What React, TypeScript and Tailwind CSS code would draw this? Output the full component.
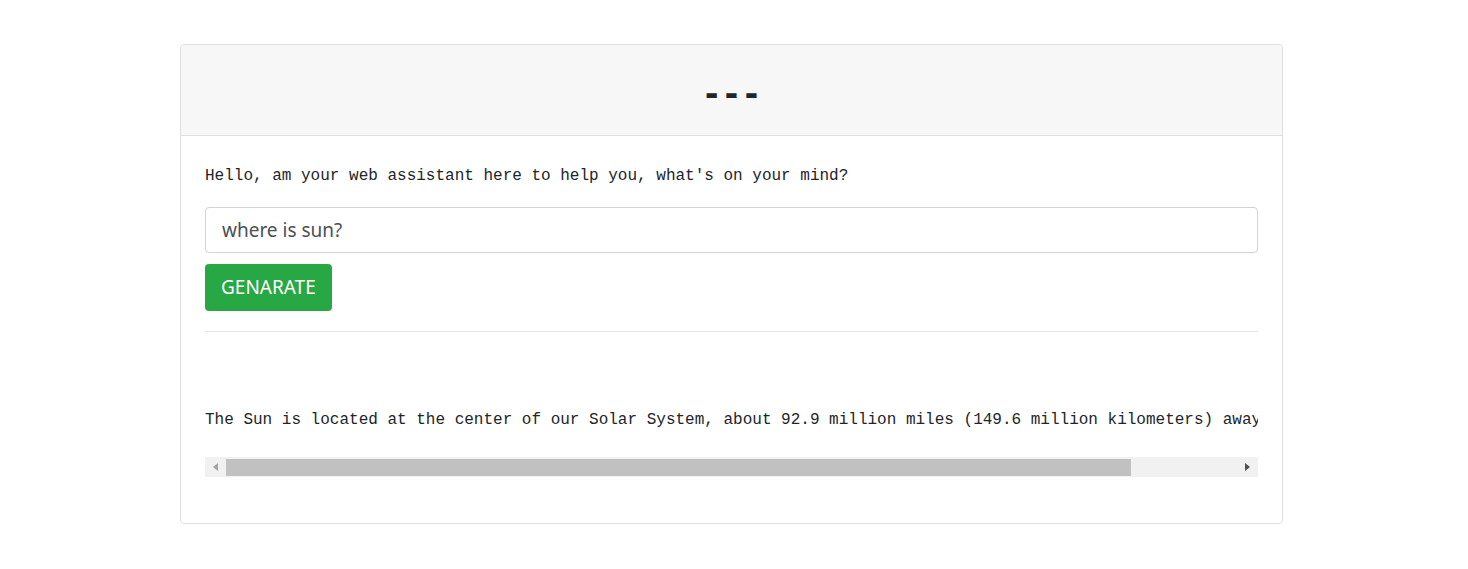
import React from "react";

export default function App() {
  return (
    <div className="min-h-[569px] bg-white pt-[44px]">
      <div className="ml-[180px] w-[1103px] rounded-[4px] border border-[#dfdfdf] bg-white">
        <div className="flex h-[91px] items-center justify-center rounded-t-[4px] border-b border-[#dfdfdf] bg-[#f7f7f7]">
          <h1 className="mt-[8px] font-['DejaVu_Sans_Mono',monospace] text-[33px] font-bold leading-[40px] text-[#212529]">---</h1>
        </div>
        <div className="px-[24px] pb-[46px] pt-[28px]">
          <p className="font-['Liberation_Mono',monospace] text-[16px] leading-[24px] text-[#212529]">
            Hello, am your web assistant here to help you, what's on your mind?
          </p>
          <input
            defaultValue="where is sun?"
            className="mt-[19px] block h-[46px] w-full rounded-[4px] border border-[#ced4da] px-[16px] font-['Noto_Sans',sans-serif] text-[19px] text-[#495057] outline-none"
          />
          <button className="mt-[11px] h-[47px] rounded-[4px] bg-[#28a745] px-[16px] font-['Noto_Sans',sans-serif] text-[19px] text-white">
            GENARATE
          </button>
          <hr className="mt-[20px] border-t border-[#e5e5e5]" />
          <div className="mt-[76px] overflow-hidden">
            <pre className="whitespace-pre font-['Liberation_Mono',monospace] text-[16px] leading-[24px] text-[#212529]">
              The Sun is located at the center of our Solar System, about 92.9 million miles (149.6 million kilometers) away from Earth.
            </pre>
          </div>
          <div className="mt-[25px] flex h-[20px] items-center bg-[#f1f1f1]">
            <div className="flex w-[21px] items-center justify-center">
              <svg width="5" height="8" viewBox="0 0 5 8"><path d="M5 0 L0 4 L5 8 Z" fill="#a3a3a3" /></svg>
            </div>
            <div className="h-[17px] w-[905px] bg-[#c1c1c1]" />
            <div className="flex-1" />
            <div className="flex w-[21px] items-center justify-center">
              <svg width="5" height="8" viewBox="0 0 5 8"><path d="M0 0 L5 4 L0 8 Z" fill="#505050" /></svg>
            </div>
          </div>
        </div>
      </div>
    </div>
  );
}
